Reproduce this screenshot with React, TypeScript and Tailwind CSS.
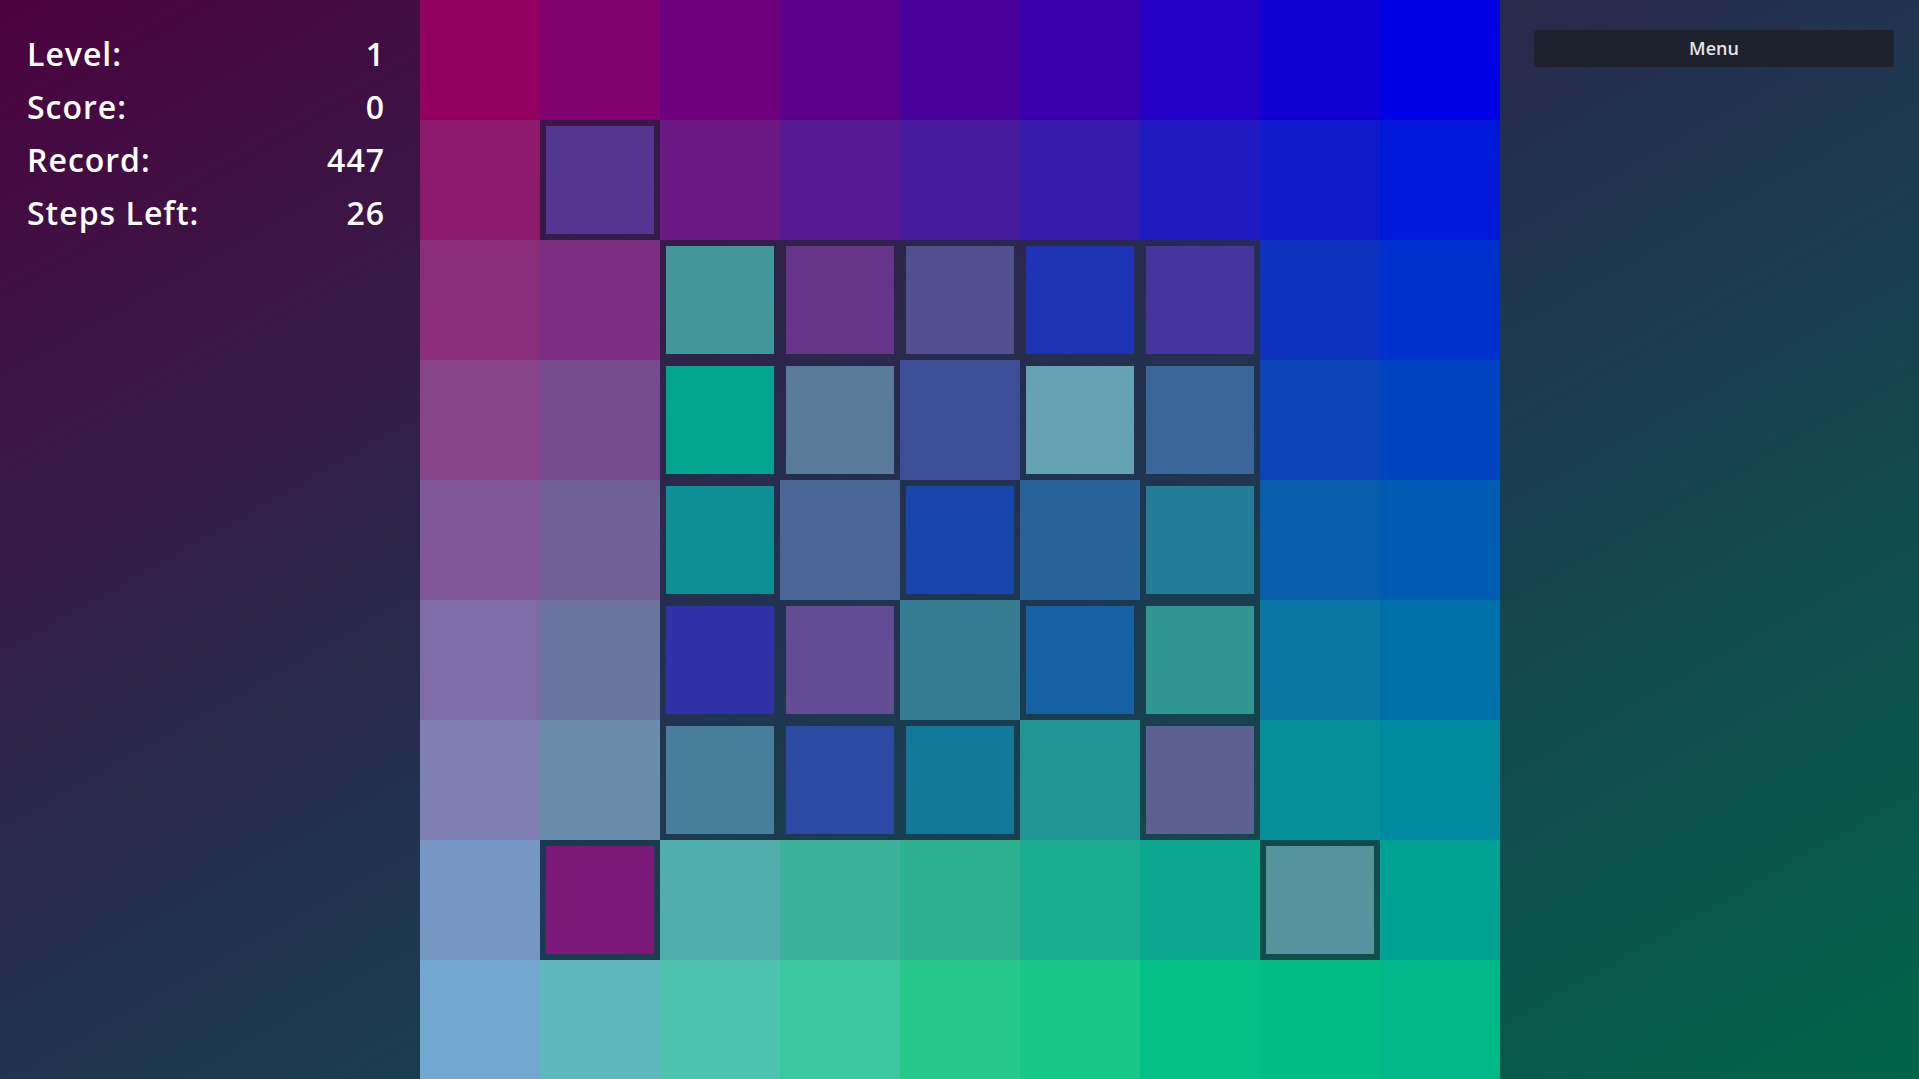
import React from 'react';

// '*' marks a tile that is out of place (drawn inset)
const BOARD: string[][] = [
  ['#920060', '#820070', '#6e007e', '#5c008c', '#4a009a', '#3a00ae', '#2400c4', '#1000d4', '#0000e4'],
  ['#8e1a6e', '*#543592', '#6a1985', '#581a92', '#461b9c', '#341bae', '#201bc0', '#101bcb', '#0018d8'],
  ['#8a2e7c', '#7c2f82', '*#43979a', '*#66358a', '*#504f90', '*#1e32b4', '*#45359c', '#0e32c0', '#0030cc'],
  ['#884488', '#764a8c', '*#04a590', '*#5a7a9a', '#3e4d98', '*#64a2b4', '*#3a6699', '#0c46b6', '#0044c0'],
  ['#80589a', '#706096', '*#0e8f94', '#4a6696', '*#1846aa', '#286499', '*#237c98', '#085eaa', '#005cb0'],
  ['#7e6ca8', '#6c74a0', '*#3030a8', '*#624c94', '#367d94', '*#1660a4', '*#309692', '#0a76a2', '#0070a8'],
  ['#7e80b4', '#688caa', '*#477e9a', '*#2c4aa4', '*#117899', '#219594', '*#5d6192', '#06909a', '#008aa0'],
  ['#7696c4', '*#7b1878', '#50aeab', '#3db29a', '#2db090', '#1cae90', '#0aa88f', '*#54949e', '#00a294'],
  ['#72a8d0', '#5eb8be', '#4ec4ae', '#3cc89e', '#26c88c', '#18c888', '#04c084', '#00be86', '#00b888'],
];

const STATS = [
  { label: 'Level:', value: '1' },
  { label: 'Score:', value: '0' },
  { label: 'Record:', value: '447' },
  { label: 'Steps Left:', value: '26' },
];

function Tile({ code }: { code: string }) {
  const inset = code.startsWith('*');
  const color = inset ? code.slice(1) : code;
  if (inset) {
    return (
      <div className="w-[120px] h-[120px] p-[6px]">
        <div className="w-full h-full" style={{ backgroundColor: color }} />
      </div>
    );
  }
  return <div className="w-[120px] h-[120px]" style={{ backgroundColor: color }} />;
}

export default function App() {
  return (
    <div
      className="h-screen w-full overflow-hidden flex bg-[linear-gradient(to_bottom_right,#4b023e_0%,#213350_50%,#006549_100%)] text-white"
      style={{ fontFamily: '"Open Sans", "Noto Sans", sans-serif' }}
    >
      <aside className="w-[420px] shrink-0 pt-[27px] pl-[27px]">
        <div className="w-[358px]">
          {STATS.map(s => (
            <div key={s.label} className="flex justify-between items-center h-[53px] text-[32px] font-semibold tracking-[1px]">
              <span>{s.label}</span>
              <span>{s.value}</span>
            </div>
          ))}
        </div>
      </aside>

      <main className="w-[1080px] h-[1080px] shrink-0 grid grid-cols-9">
        {BOARD.map((row, r) =>
          row.map((code, c) => <Tile key={`${r}-${c}`} code={code} />)
        )}
      </main>

      <aside className="flex-1 pt-[30px] pl-[34px] pr-[25px]">
        <button className="w-full h-[37px] rounded-[3px] bg-[#1e222d] text-[#e2e4e8] text-[18px] font-semibold">
          Menu
        </button>
      </aside>
    </div>
  );
}
